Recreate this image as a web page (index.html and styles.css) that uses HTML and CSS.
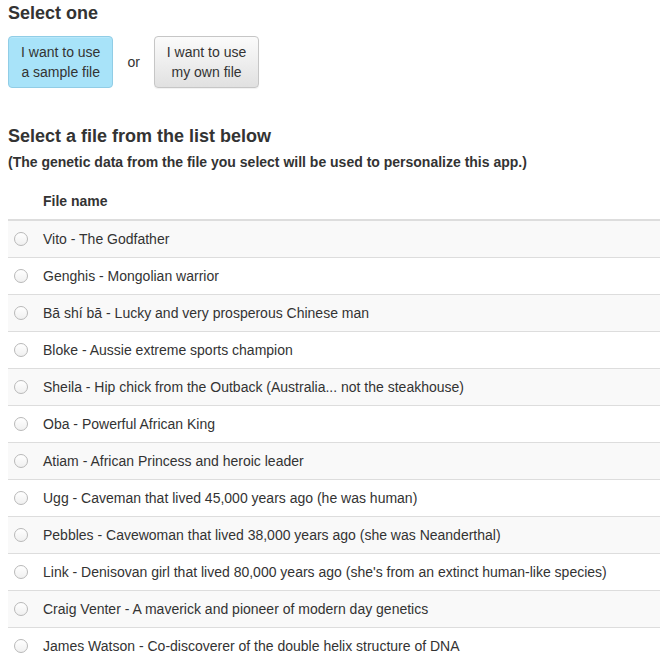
FILE: index.html
```html
<!DOCTYPE html>
<html>
<head>
<meta charset="utf-8">
<link rel="stylesheet" href="styles.css">
</head>
<body>
<div class="page">
  <h4 class="heading">Select one</h4>
  <div class="choice">
    <button class="btn btn-active">I want to use<br>a sample file</button>
    <span class="or">or</span>
    <button class="btn btn-default">I want to use<br>my own file</button>
  </div>
  <h4 class="heading heading-list">Select a file from the list below</h4>
  <p class="note">(The genetic data from the file you select will be used to personalize this app.)</p>
  <table class="files">
    <thead>
      <tr><th class="col-radio"></th><th>File name</th></tr>
    </thead>
    <tbody>
      <tr><td class="col-radio"><input type="radio" name="f" class="radio"></td><td>Vito - The Godfather</td></tr>
      <tr><td class="col-radio"><input type="radio" name="f" class="radio"></td><td>Genghis - Mongolian warrior</td></tr>
      <tr><td class="col-radio"><input type="radio" name="f" class="radio"></td><td>Bā shí bā - Lucky and very prosperous Chinese man</td></tr>
      <tr><td class="col-radio"><input type="radio" name="f" class="radio"></td><td>Bloke - Aussie extreme sports champion</td></tr>
      <tr><td class="col-radio"><input type="radio" name="f" class="radio"></td><td>Sheila - Hip chick from the Outback (Australia... not the steakhouse)</td></tr>
      <tr><td class="col-radio"><input type="radio" name="f" class="radio"></td><td>Oba - Powerful African King</td></tr>
      <tr><td class="col-radio"><input type="radio" name="f" class="radio"></td><td>Atiam - African Princess and heroic leader</td></tr>
      <tr><td class="col-radio"><input type="radio" name="f" class="radio"></td><td>Ugg - Caveman that lived 45,000 years ago (he was human)</td></tr>
      <tr><td class="col-radio"><input type="radio" name="f" class="radio"></td><td>Pebbles - Cavewoman that lived 38,000 years ago (she was Neanderthal)</td></tr>
      <tr><td class="col-radio"><input type="radio" name="f" class="radio"></td><td>Link - Denisovan girl that lived 80,000 years ago (she's from an extinct human-like species)</td></tr>
      <tr><td class="col-radio"><input type="radio" name="f" class="radio"></td><td>Craig Venter - A maverick and pioneer of modern day genetics</td></tr>
      <tr><td class="col-radio"><input type="radio" name="f" class="radio"></td><td>James Watson - Co-discoverer of the double helix structure of DNA</td></tr>
    </tbody>
  </table>
</div>
</body>
</html>
```

FILE: styles.css
```css
html, body {
  margin: 0;
  padding: 0;
  background: #fff;
}
body {
  font-family: "Liberation Sans", Arial, sans-serif;
  font-size: 14px;
  line-height: 20px;
  color: #333;
}
.page {
  padding: 3px 0 0 8px;
}
.heading {
  font-size: 18px;
  font-weight: bold;
  line-height: 20px;
  margin: 0 0 13px 0;
}
.choice {
  display: flex;
  align-items: center;
}
.btn {
  font-family: "Liberation Sans", Arial, sans-serif;
  font-size: 14px;
  line-height: 20px;
  color: #333;
  padding: 5px 12px;
  border-radius: 4px;
  text-align: center;
  margin: 0;
}
.btn-active {
  background: #a8e3f9;
  border: 1px solid #91cde6;
  box-shadow: inset 0 1px 0 rgba(255,255,255,0.2);
}
.btn-default {
  background: linear-gradient(to bottom, #fbfbfb 0%, #e1e1e1 100%);
  border: 1px solid #c6c6c6;
  box-shadow: 0 1px 1px rgba(0,0,0,0.06);
}
.or {
  margin: 0 14px 0 14px;
}
.heading-list {
  margin-top: 38px;
  margin-bottom: 6px;
}
.note {
  font-size: 14px;
  font-weight: bold;
  line-height: 20px;
  margin: 0 0 11px 0;
}
.files {
  width: calc(100% + 1px);
  border-collapse: collapse;
  border-spacing: 0;
}
.files th,
.files td {
  padding: 8px;
  text-align: left;
  line-height: 20px;
  vertical-align: top;
}
.files th {
  font-weight: bold;
  border-bottom: 2px solid #dddddd;
}
.files td {
  border-top: 1px solid #dddddd;
}
.files tbody tr:first-child td {
  border-top: 0;
}
.files tbody tr:nth-child(odd) td {
  background: #f9f9f9;
}
.files .col-radio {
  width: 14px;
  padding-left: 6px;
  padding-right: 7px;
}
.radio {
  -webkit-appearance: none;
  appearance: none;
  display: block;
  width: 14px;
  height: 14px;
  margin: 3px 0 0 0;
  border: 1px solid #b9b9b9;
  border-radius: 50%;
  background: linear-gradient(to bottom, #ffffff 0%, #f0f0f0 100%);
  box-sizing: border-box;
}
```
